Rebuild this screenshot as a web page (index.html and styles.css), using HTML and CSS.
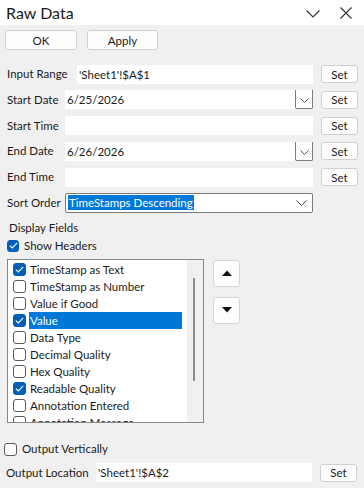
FILE: index.html
```html
<!DOCTYPE html>
<html>
<head>
<meta charset="utf-8">
<link rel="stylesheet" href="styles.css">
</head>
<body>
<div class="pane">
  <div class="titlebar">
    <span class="title">Raw Data</span>
    <div class="title-icons">
      <svg class="ico-chev" width="14" height="8" viewBox="0 0 14 8"><path d="M0.5 0.5 L7 7 L13.5 0.5" fill="none" stroke="#333" stroke-width="1.1"/></svg>
      <svg class="ico-x" width="12" height="12" viewBox="0 0 12 12"><path d="M0.5 0.5 L11.5 11.5 M11.5 0.5 L0.5 11.5" fill="none" stroke="#333" stroke-width="1.1"/></svg>
    </div>
  </div>
  <div class="toolbar">
    <button class="btn btn-ok">OK</button>
    <button class="btn btn-apply">Apply</button>
  </div>
  <div class="form">
    <div class="row">
      <span class="label lbl-input">Input Range</span>
      <div class="field w-input">'Sheet1'!$A$1</div>
      <button class="btn set">Set</button>
    </div>
    <div class="row">
      <span class="label lbl-std">Start Date</span>
      <div class="field combo w-std">6/25/2026<span class="drop"><svg width="9" height="5" viewBox="0 0 9 5"><path d="M0.5 0.5 L4.5 4.5 L8.5 0.5" fill="none" stroke="#555" stroke-width="1"/></svg></span></div>
      <button class="btn set">Set</button>
    </div>
    <div class="row">
      <span class="label lbl-std">Start Time</span>
      <div class="field w-std"></div>
      <button class="btn set">Set</button>
    </div>
    <div class="row">
      <span class="label lbl-std">End Date</span>
      <div class="field combo w-std">6/26/2026<span class="drop"><svg width="9" height="5" viewBox="0 0 9 5"><path d="M0.5 0.5 L4.5 4.5 L8.5 0.5" fill="none" stroke="#555" stroke-width="1"/></svg></span></div>
      <button class="btn set">Set</button>
    </div>
    <div class="row">
      <span class="label lbl-std">End Time</span>
      <div class="field w-std"></div>
      <button class="btn set">Set</button>
    </div>
    <div class="row">
      <span class="label lbl-sort">Sort Order</span>
      <div class="select"><span class="sel-text">TimeStamps Descending</span><svg class="sel-chev" width="11" height="6" viewBox="0 0 11 6"><path d="M0.5 0.5 L5.5 5.5 L10.5 0.5" fill="none" stroke="#444" stroke-width="1"/></svg></div>
    </div>
  </div>
  <div class="fields-title">Display Fields</div>
  <label class="check-line show-headers"><span class="cb checked"><svg width="9" height="7" viewBox="0 0 9 7"><path d="M0.8 3.6 L3.3 6 L8.2 0.9" fill="none" stroke="#fff" stroke-width="1.1"/></svg></span>Show Headers</label>
  <div class="list-area">
    <div class="listbox">
      <div class="items">
        <div class="item"><span class="cb checked"><svg width="9" height="7" viewBox="0 0 9 7"><path d="M0.8 3.6 L3.3 6 L8.2 0.9" fill="none" stroke="#fff" stroke-width="1.1"/></svg></span><span class="itext">TimeStamp as Text</span></div>
        <div class="item"><span class="cb"></span><span class="itext">TimeStamp as Number</span></div>
        <div class="item"><span class="cb"></span><span class="itext">Value if Good</span></div>
        <div class="item selected"><span class="cb checked"><svg width="9" height="7" viewBox="0 0 9 7"><path d="M0.8 3.6 L3.3 6 L8.2 0.9" fill="none" stroke="#fff" stroke-width="1.1"/></svg></span><span class="itext">Value</span></div>
        <div class="item"><span class="cb"></span><span class="itext">Data Type</span></div>
        <div class="item"><span class="cb"></span><span class="itext">Decimal Quality</span></div>
        <div class="item"><span class="cb"></span><span class="itext">Hex Quality</span></div>
        <div class="item"><span class="cb checked"><svg width="9" height="7" viewBox="0 0 9 7"><path d="M0.8 3.6 L3.3 6 L8.2 0.9" fill="none" stroke="#fff" stroke-width="1.1"/></svg></span><span class="itext">Readable Quality</span></div>
        <div class="item"><span class="cb"></span><span class="itext">Annotation Entered</span></div>
        <div class="item"><span class="cb"></span><span class="itext">Annotation Message</span></div>
      </div>
      <div class="scrollbar"><div class="thumb"></div></div>
    </div>
    <div class="movers">
      <button class="btn mover"><svg width="10" height="6" viewBox="0 0 10 6"><path d="M0 6 L5 0.5 L10 6 Z" fill="#111"/></svg></button>
      <button class="btn mover"><svg width="10" height="6" viewBox="0 0 10 6"><path d="M0 0 L5 5.5 L10 0 Z" fill="#111"/></svg></button>
    </div>
  </div>
  <label class="check-line out-vert"><span class="cb"></span>Output Vertically</label>
  <div class="row out-row">
    <span class="label lbl-out">Output Location</span>
    <div class="field w-out">'Sheet1'!$A$2</div>
    <button class="btn set">Set</button>
  </div>
</div>
</body>
</html>
```

FILE: styles.css
```css
* { box-sizing: border-box; }
html, body { margin: 0; padding: 0; }
body {
  width: 364px;
  height: 488px;
  background: #f0f0f0;
  font-family: "Lato", "Noto Sans", sans-serif;
  font-size: 11.5px;
  color: #1b1b1b;
  overflow: hidden;
}
.pane { display: flex; flex-direction: column; }
.titlebar {
  height: 25px;
  background: #fff;
  display: flex;
  align-items: center;
  justify-content: space-between;
  padding: 0 12px 0 6px;
  flex: none;
}
.title { font-size: 16px; line-height: 20px; color: #1b1b1b; }
.title-icons { display: flex; align-items: center; gap: 20px; padding-top: 1px; }
.ico-chev { margin-top: 1px; }

.btn {
  font-family: inherit;
  font-size: 11.5px;
  color: #1b1b1b;
  background: #fdfdfd;
  border: 1px solid #d0d0d0;
  border-radius: 3px;
  padding: 0;
  display: flex;
  align-items: center;
  justify-content: center;
}
.toolbar { display: flex; gap: 10px; padding: 5px 0 0 5px; height: 25px; flex: none; }
.btn-ok { width: 72px; height: 20px; }
.btn-apply { width: 71px; height: 20px; }

.form { display: flex; flex-direction: column; gap: 5.8px; padding-top: 14px; }
.row { display: flex; align-items: center; height: 20px; padding-left: 7px; flex: none; }
.label { white-space: nowrap; line-height: 20px; }
.lbl-input { width: 70px; }
.lbl-std { width: 58px; }
.lbl-sort { width: 58px; }
.lbl-out { width: 90px; }
.field {
  background: #fff;
  height: 19px;
  line-height: 19px;
  padding-left: 2px;
  position: relative;
  white-space: nowrap;
}
.w-input { width: 236px; }
.w-std { width: 248px; }
.w-out { width: 216px; }
.drop {
  position: absolute;
  right: 0;
  top: 0;
  width: 18px;
  height: 19px;
  border: 1px solid #7a7a7a;
  border-top: none;
  border-radius: 0 0 2px 2px;
  display: flex;
  align-items: center;
  justify-content: center;
  padding-top: 3px;
}
.set { width: 37px; height: 18px; margin-left: 8px; }

.select {
  width: 248px;
  height: 20px;
  border: 1px solid #7a7a7a;
  border-radius: 2px;
  background: #fff;
  display: flex;
  align-items: center;
  justify-content: space-between;
  padding: 0 5px 0 2px;
}
.sel-text { background: #0078d7; color: #fff; line-height: 15px; padding: 0 1px; }

.fields-title { padding: 7px 0 0 9px; line-height: 16px; flex: none; }
.check-line { display: flex; align-items: center; gap: 5px; line-height: 16px; flex: none; }
.show-headers { padding: 2px 0 0 7px; }
.cb {
  width: 12px;
  height: 12px;
  border: 1px solid #5a5a5a;
  border-radius: 3px;
  background: #fff;
  display: inline-flex;
  align-items: center;
  justify-content: center;
  flex: none;
}
.cb.checked { background: #005fb8; border-color: #005fb8; }

.list-area { display: flex; gap: 9px; padding: 5px 0 0 7px; flex: none; }
.listbox {
  width: 197px;
  height: 164px;
  border: 1px solid #828790;
  background: #fff;
  display: flex;
  overflow: hidden;
}
.items { flex: 1; padding: 1px 5px 0 0; overflow: hidden; }
.item { display: flex; align-items: center; height: 17px; padding-left: 5px; white-space: nowrap; }
.item .cb { width: 13px; height: 13px; margin-right: 3px; }
.itext { flex: 1; line-height: 17px; padding-left: 1px; }
.item.selected .itext { background: #0078d7; color: #fff; }
.scrollbar { width: 16px; background: #f0f0f0; position: relative; flex: none; }
.thumb { position: absolute; left: 6px; top: 18px; width: 2px; height: 103px; background: #8a8a8a; }
.movers { display: flex; flex-direction: column; gap: 10px; padding-top: 1px; }
.mover { width: 27px; height: 27px; border-color: #d4d4d4; }

.out-vert { padding: 18.5px 0 0 4px; }
.out-vert .cb { width: 13px; height: 13px; }
.out-row { margin-top: 5.5px; padding-left: 6px; }
```
